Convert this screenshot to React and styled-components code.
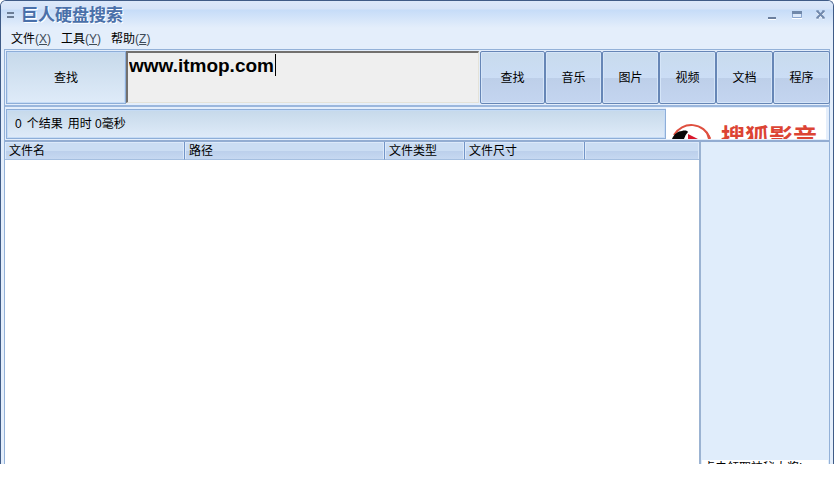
import React from "react";
import styled, { createGlobalStyle } from "styled-components";

const columns = [
  { title: "文件名", width: 180 },
  { title: "路径", width: 200 },
  { title: "文件类型", width: 80 },
  { title: "文件尺寸", width: 120 },
  { title: "" },
];

const menus = [
  { title: "文件", hotkey: "X" },
  { title: "工具", hotkey: "Y" },
  { title: "帮助", hotkey: "Z" },
];

const filters = ["音乐", "图片", "视频", "文档", "程序"];

const TitleBar = () => {
  return (
    <Title>
      <Grip />
      <h1>巨人硬盘搜索</h1>
      <WindowButton aria-label="最小化">
        <svg width="11" height="11">
          <path d="M1 8h8v2H1z" fill="#6b7f9e" />
          <path d="M1 10h8v1H1z" fill="#fff" />
        </svg>
      </WindowButton>
      <WindowButton aria-label="最大化">
        <svg width="11" height="11">
          <path d="M1.5 2.5h9v6h-9z" fill="#dce9fa" stroke="#8ba6cf" />
          <path d="M1 2h10v3H1z" fill="#7088aa" />
          <path d="M1 9h10v1H1z" fill="#fff" />
        </svg>
      </WindowButton>
      <WindowButton aria-label="关闭">
        <svg width="11" height="11">
          <path d="M2 3l7 7M9 3l-7 7" stroke="#fff" strokeWidth="2" />
          <path d="M2 2l7 7M9 2l-7 7" stroke="#7189ad" strokeWidth="2" />
          <path d="M1 2h3M7 2h3M1 9h3M7 9h3" stroke="#7189ad" />
        </svg>
      </WindowButton>
    </Title>
  );
};

const SohuLogo = () => {
  return (
    <svg width="55" height="31" viewBox="0 0 55 31">
      <path d="M8 27A20 20 0 0 1 44 30" fill="none" stroke="#df5040" strokeWidth="2" />
      <path d="M38 22Q43 25 45 31H42Q41 26 38 22z" fill="#df5040" />
      <path d="M6 31C8 26 12 23 16 23C19 22 22 23 22 24Q19 27 18 31z" fill="#080808" />
      <path d="M22 26l10 5H22z" fill="#d8182c" />
    </svg>
  );
};

const App = () => {
  return (
    <>
      <GlobalStyle />
      <Window>
        <TitleBar />

        <MenuBar>
          {menus.map((menu) => (
            <button key={menu.hotkey}>
              {menu.title}
              <Hotkey>
                (<u>{menu.hotkey}</u>)
              </Hotkey>
            </button>
          ))}
        </MenuBar>

        <Body>
          <Toolbar>
            <FindButton>查找</FindButton>
            <SearchField>
              <SearchInput aria-label="搜索" defaultValue="www.itmop.com" />
              <Caret />
            </SearchField>
            <ToolButton $wide>查找</ToolButton>
            {filters.map((name) => (
              <ToolButton key={name}>{name}</ToolButton>
            ))}
          </Toolbar>

          <StatusRow>
            <Status>
              <span>0</span>
              <span>个结果</span>
              <span>用时 0毫秒</span>
            </Status>
            <Banner href="#sohu">
              <SohuLogo />
              <span>搜狐影音</span>
            </Banner>
          </StatusRow>

          <Content>
            <Results>
              <Table>
                <colgroup>
                  {columns.map((column, i) => (
                    <Col key={i} $width={column.width} />
                  ))}
                </colgroup>
                <thead>
                  <tr>
                    {columns.map((column, i) => (
                      <th key={i}>{column.title}</th>
                    ))}
                  </tr>
                </thead>
                <tbody />
              </Table>
            </Results>
            <Side>
              <Promo href="#promo">点击领取神秘大奖!</Promo>
            </Side>
          </Content>
        </Body>
      </Window>
    </>
  );
};

export default App;

const GlobalStyle = createGlobalStyle`
  * {
    box-sizing: border-box;
  }

  body {
    margin: 0;
    background: #fff;
    color: #000;
    font-family: "Liberation Sans", "Noto Sans CJK SC", sans-serif;
    font-size: 12px;
    line-height: 16px;
  }

  button, input {
    font: inherit;
    color: inherit;
  }
`;

const Window = styled.div`
  display: flex;
  flex-direction: column;
  height: calc(100vh - 18px);
  padding: 0 3px;
  border: 1px solid #3f5b87;
  border-bottom: 0;
  border-radius: 6px 6px 0 0;
  background: #e4eefb;
  overflow: hidden;
`;

const Title = styled.header`
  display: flex;
  align-items: center;
  height: 27px;
  margin: 0 -3px;
  padding: 0 7px 0 6px;
  background: linear-gradient(#dce8fa 0, #d5e3f8 8px, #c6dcf8 9px, #e4eefb 100%);

  h1 {
    flex: 1;
    margin: 0 0 0 7px;
    padding-top: 2px;
    font-size: 17px;
    line-height: 24px;
    font-weight: 700;
    color: #4a70aa;
    text-shadow: 1px 1px #fff;
  }
`;

const Grip = styled.span`
  width: 7px;
  height: 6px;
  border: solid #6b7d96;
  border-width: 2px 0;
`;

const WindowButton = styled.button`
  display: flex;
  width: 11px;
  height: 11px;
  margin-left: 13px;
  padding: 0;
  border: 0;
  background: none;
`;

const MenuBar = styled.nav`
  display: flex;
  gap: 10px;
  height: 21px;
  padding-left: 7px;

  button {
    padding: 0;
    border: 0;
    background: none;
  }
`;

const Hotkey = styled.span`
  color: #3d4a57;
`;

const Body = styled.main`
  display: flex;
  flex: 1;
  flex-direction: column;
  min-height: 0;
  border: 1px solid #93b1d8;
  border-bottom: 0;
`;

const Toolbar = styled.div`
  display: flex;
  height: 57px;
  margin-right: -1px;
  padding: 1px 0 1px 1px;
  border-bottom: 2px solid #9bb7dd;
`;

const FindButton = styled.button`
  width: 120px;
  padding: 0;
  border: 1px solid #8eaed8;
  box-shadow: inset 0 0 0 1px #c5dbf5;
  background: linear-gradient(#c6d9ea, #dfebf9);
`;

const SearchField = styled.div`
  position: relative;
  display: flex;
  flex: 1;
  min-width: 0;
  padding-right: 1px;
`;

const SearchInput = styled.input`
  flex: 1;
  min-width: 0;
  height: 52px;
  padding: 0 0 23px 1px;
  border: 1px solid #e4e2d8;
  border-top: 2px solid #72706e;
  border-left: 2px solid #72706e;
  outline: 0;
  background: #efefef;
  caret-color: transparent;

  && {
    font-size: 19px;
    font-weight: 700;
  }
`;

const Caret = styled.span`
  position: absolute;
  top: 3px;
  left: 149px;
  width: 1px;
  height: 22px;
  background: #000;
`;

const ToolButton = styled.button`
  width: ${(props) => (props.$wide ? 65 : 57)}px;
  padding: 0;
  border: 1px solid #6686b6;
  border-radius: 2px;
  box-shadow: inset 0 0 0 1px #d5e5f8;
  background: linear-gradient(#c8dbed, #cbddf5 50%, #bdcfe9 51%, #c4d5f0);
`;

const StatusRow = styled.div`
  display: flex;
  height: 35px;
  padding: 1px 3px 1px 1px;
  border-bottom: 2px solid #93add2;
`;

const Status = styled.div`
  display: flex;
  flex: 1;
  align-items: center;
  gap: 5px;
  height: 30px;
  margin-top: 1px;
  padding-left: 8px;
  border: 1px solid #8eaed8;
  box-shadow: inset 0 0 0 1px #c5dbf5;
  background: linear-gradient(#c6d9ea, #dfebf9);
`;

const Banner = styled.a`
  display: flex;
  width: 160px;
  overflow: hidden;
  background: #fff;
  color: #dc4434;
  font-size: 24px;
  line-height: 60px;
  font-weight: 700;
  text-decoration: none;

  svg {
    flex: none;
  }
`;

const Content = styled.div`
  display: flex;
  flex: 1;
  min-height: 0;
`;

const Results = styled.section`
  flex: 1;
  background: #fff;
`;

const Table = styled.table`
  width: 100%;
  table-layout: fixed;
  border-collapse: separate;
  border-spacing: 0;

  th {
    height: 18px;
    padding: 1px 4px 0;
    border-right: 1px solid #7295c8;
    border-bottom: 1px solid #a5bfe0;
    box-shadow: inset 1px 1px #dce9fa, inset -1px 0 #dce9fa;
    background: linear-gradient(#cbddf3 50%, #bbcfeb 51%, #c6d8f1);
    font-weight: 400;
    text-align: left;
  }

  th:last-child {
    border-right: 0;
  }
`;

const Col = styled.col`
  width: ${(props) => (props.$width ? props.$width + "px" : "auto")};
`;

const Side = styled.aside`
  display: flex;
  flex-direction: column;
  justify-content: flex-end;
  width: 130px;
  border-left: 2px solid #9bb3d2;
  background: #e0edfb;
  overflow: hidden;
`;

const Promo = styled.a`
  height: 4px;
  margin: 0 1px;
  padding-left: 1px;
  background: #fff;
  color: #000;
  overflow: hidden;
  text-decoration: none;
`;
